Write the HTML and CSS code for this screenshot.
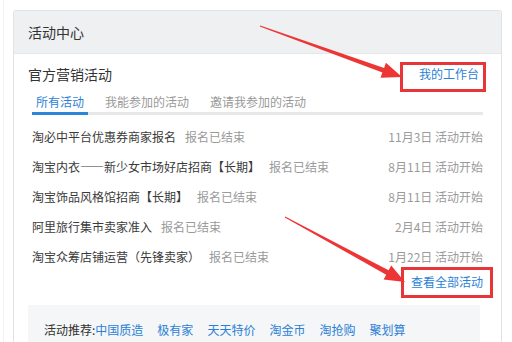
FILE: index.html
```html
<!DOCTYPE html>
<html lang="zh-CN">
<head>
<meta charset="utf-8">
<title>活动中心</title>
<link rel="stylesheet" href="styles.css">
</head>
<body>
<div class="page">
  <div class="card">
    <div class="card-head">活动中心</div>
    <div class="card-body">
      <div class="title-row">
        <span class="title">官方营销活动</span>
        <a class="link workbench">我的工作台</a>
      </div>
      <div class="tabs">
        <span class="tab active">所有活动</span>
        <span class="tab">我能参加的活动</span>
        <span class="tab">邀请我参加的活动</span>
      </div>
      <ul class="list">
        <li class="row"><span class="name">淘必中平台优惠券商家报名</span><span class="status">报名已结束</span><span class="date">11月3日 活动开始</span></li>
        <li class="row"><span class="name">淘宝内衣——新少女市场好店招商【长期】</span><span class="status">报名已结束</span><span class="date">8月11日 活动开始</span></li>
        <li class="row"><span class="name">淘宝饰品风格馆招商【长期】</span><span class="status">报名已结束</span><span class="date">8月11日 活动开始</span></li>
        <li class="row"><span class="name">阿里旅行集市卖家准入</span><span class="status">报名已结束</span><span class="date">2月4日 活动开始</span></li>
        <li class="row"><span class="name">淘宝众筹店铺运营（先锋卖家）</span><span class="status">报名已结束</span><span class="date">1月22日 活动开始</span></li>
      </ul>
      <div class="more-row"><a class="link all">查看全部活动</a></div>
      <div class="recommend">
        <span class="rec-label">活动推荐:</span><a class="link rec">中国质造</a><a class="link rec">极有家</a><a class="link rec">天天特价</a><a class="link rec">淘金币</a><a class="link rec">淘抢购</a><a class="link rec">聚划算</a>
      </div>
    </div>
  </div>
</div>

<div class="mark mark-top"></div>
<div class="mark mark-bottom"></div>
<svg class="arrows" width="512" height="342" viewBox="0 0 512 342" aria-hidden="true">
  <polygon fill="#ee3535" points="259.8,26.5 382.4,72.6 380.5,77.8 402,77 385.9,62.7 384.1,67.9 260.2,25.5"/>
  <polygon fill="#ee3535" points="284.8,217.4 386.2,274.7 383.6,279.5 405,282 391.2,265.5 388.6,270.3 285.2,216.6"/>
</svg>
</body>
</html>
```

FILE: styles.css
```css
* { box-sizing: border-box; }
html, body {
  margin: 0;
  padding: 0;
  background: #fff;
  font-family: "Noto Sans CJK SC", "Noto Sans", sans-serif;
  font-size: 12px;
  color: #333;
  overflow: hidden;
}
.page {
  margin-left: 3px;
  border-left: 1px solid #f2f2f2;
  padding: 10px 10px 0 9px;
  height: 342px;
}
.card {
  width: 489px;
  height: 332px;
  border: 1px solid #e2e3e5;
  border-bottom: none;
  border-radius: 3px 3px 0 0;
  overflow: hidden;
}
.card-head {
  height: 43px;
  line-height: 42px;
  background: #eef0f2;
  border-bottom: 1px solid #e4e6e8;
  padding-left: 14px;
  font-size: 14px;
  color: #333;
}
.card-body {
  padding: 10px 18px 0 14px;
}
.title-row {
  display: flex;
  justify-content: space-between;
  align-items: center;
  height: 20px;
  line-height: 20px;
}
.title {
  font-size: 14px;
  color: #333;
}
.link {
  color: #2b7fd6;
  text-decoration: none;
  cursor: pointer;
}
.workbench {
  margin-right: 4px;
}
.tabs {
  display: flex;
  margin: 8px 0 0 4px;
  border-bottom: 3px solid #e8e8e8;
  gap: 13px;
}
.tab {
  line-height: 20px;
  padding: 0 4px;
  color: #999;
  margin-bottom: -3px;
  border-bottom: 3px solid transparent;
}
.tab.active {
  color: #2b7fd6;
  border-bottom-color: #2a86d8;
}
.list {
  list-style: none;
  margin: 0;
  padding: 6px 0 0 4px;
}
.row {
  display: flex;
  align-items: center;
  height: 30px;
}
.name {
  color: #3a3a3a;
}
.status {
  color: #9a9a9a;
  margin-left: 9px;
}
.date {
  margin-left: auto;
  color: #9a9a9a;
}
.more-row {
  display: flex;
  justify-content: flex-end;
  margin-top: 1px;
  line-height: 20px;
}
.recommend {
  margin: 13px 3px 0 0;
  background: #f5f6f7;
  padding: 15px 0 0 16px;
  height: 37px;
  line-height: 20px;
}
.rec-label {
  color: #333;
}
.rec {
  margin-right: 14px;
}
.mark {
  position: absolute;
  border: 3px solid #e8353a;
}
.mark-top {
  left: 400px;
  top: 62px;
  width: 86px;
  height: 30px;
}
.mark-bottom {
  left: 401px;
  top: 267px;
  width: 92px;
  height: 31px;
}
.arrows {
  position: absolute;
  left: 0;
  top: 0;
}
```
